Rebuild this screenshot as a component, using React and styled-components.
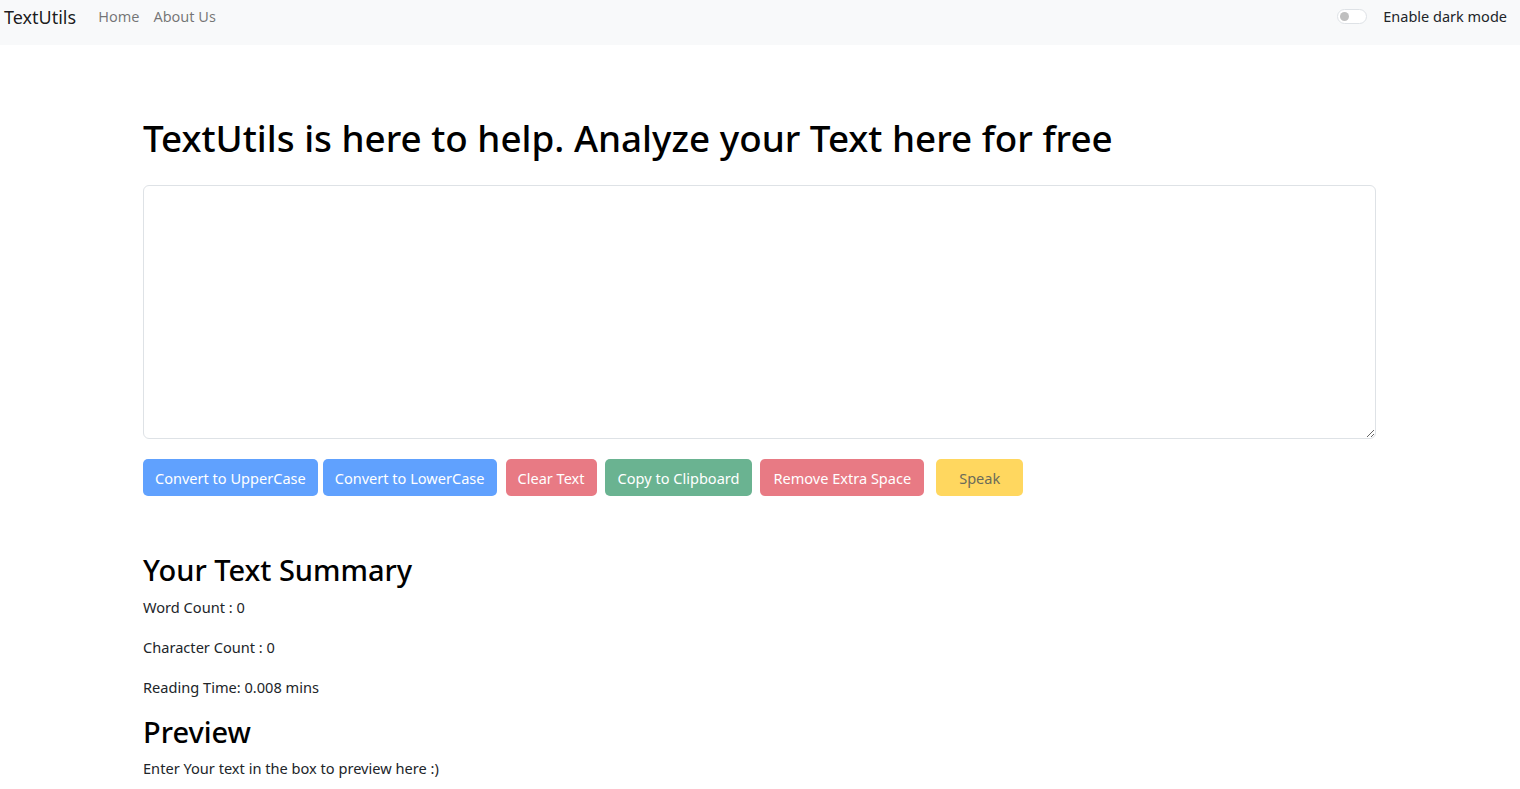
import React, { useState } from 'react';
import styled, { createGlobalStyle } from 'styled-components';

const Global = createGlobalStyle`
* { box-sizing: border-box; }
body {
  margin: 0;
  font-family: "Noto Sans", "Open Sans", sans-serif;
  font-size: 15px;
  line-height: 1.5;
  color: #212529;
  background: #fff;
}
`

const Nav = styled.nav`
display: flex;
align-items: flex-start;
justify-content: space-between;
height: 45px;
padding: 5px 13px 0 4px;
background: #f8f9fa;
`

const Left = styled.div`
display: flex;
align-items: center;
height: 24px;
`

const Brand = styled.a`
font-size: 18px;
color: rgba(0, 0, 0, 0.9);
margin-right: 22px;
text-decoration: none;
`

const NavLink = styled.a`
font-size: 14.5px;
color: rgba(0, 0, 0, 0.55);
margin-right: 14px;
text-decoration: none;
`

const Switch = styled.label`
display: flex;
align-items: center;
height: 23px;
gap: 16px;
font-size: 14.5px;
color: #212529;
`

const Track = styled.span`
position: relative;
width: 30px;
height: 15px;
border: 1px solid #dee2e6;
border-radius: 8px;
background: #fff;
`

const Knob = styled.span`
position: absolute;
left: 2px;
top: 2px;
width: 9px;
height: 9px;
border-radius: 50%;
background: #bfbfbf;
`

const Container = styled.main`
width: 1233px;
margin: 0 auto 0 143px;
padding-top: 71px;
`

const Title = styled.h1`
margin: 0 0 25px;
font-size: 36.8px;
font-weight: 500;
line-height: 1.2;
color: #000;
`

const Area = styled.textarea`
display: block;
width: 100%;
height: 254px;
border: 1px solid #dee2e6;
border-radius: 6px;
resize: vertical;
`

const Buttons = styled.div`
display: flex;
margin-top: 20px;
`

const colors = {
  primary: { bg: '#60a1fe', fg: '#fff' },
  danger: { bg: '#e87a84', fg: '#fff' },
  success: { bg: '#6ab391', fg: '#fff' },
  warning: { bg: '#ffd75f', fg: '#6b6b5a' },
};

const Btn = styled.button`
height: 37px;
padding: 0 ${p => p.$pad || 12}px;
margin-right: ${p => p.$gap}px;
border: none;
border-radius: 5px;
font-family: inherit;
font-size: 14.55px;
background: ${p => colors[p.$kind].bg};
color: ${p => colors[p.$kind].fg};
`

const Sub = styled.h2`
margin: 57px 0 7px;
font-size: 29px;
font-weight: 500;
line-height: 1.2;
color: #000;
`

const Para = styled.p`
margin: 0 0 16px;
font-size: 14.6px;
line-height: 24px;
`

const Preview = styled(Sub)`
margin-top: 4px;
margin-bottom: 6px;
`

export default function App() {
  const [text] = useState('');
  const words = text.split(/\s+/).filter(w => w.length > 0).length;

  return <>
    <Global />
    <Nav>
      <Left>
        <Brand>TextUtils</Brand>
        <NavLink>Home</NavLink>
        <NavLink>About Us</NavLink>
      </Left>
      <Switch>
        <Track><Knob /></Track>
        Enable dark mode
      </Switch>
    </Nav>
    <Container>
      <Title>TextUtils is here to help. Analyze your Text here for free</Title>
      <Area value={text} readOnly />
      <Buttons>
        <Btn $kind="primary" $gap={5}>Convert to UpperCase</Btn>
        <Btn $kind="primary" $gap={9}>Convert to LowerCase</Btn>
        <Btn $kind="danger" $gap={8}>Clear Text</Btn>
        <Btn $kind="success" $gap={8} $pad={13}>Copy to Clipboard</Btn>
        <Btn $kind="danger" $gap={12} $pad={13}>Remove Extra Space</Btn>
        <Btn $kind="warning" $gap={0} $pad={23}>Speak</Btn>
      </Buttons>
      <Sub>Your Text Summary</Sub>
      <Para>Word Count : {words}</Para>
      <Para>Character Count : {text.length}</Para>
      <Para>Reading Time: {0.008 * words || 0.008} mins</Para>
      <Preview>Preview</Preview>
      <Para>{text.length > 0 ? text : 'Enter Your text in the box to preview here :)'}</Para>
    </Container>
  </>
}
